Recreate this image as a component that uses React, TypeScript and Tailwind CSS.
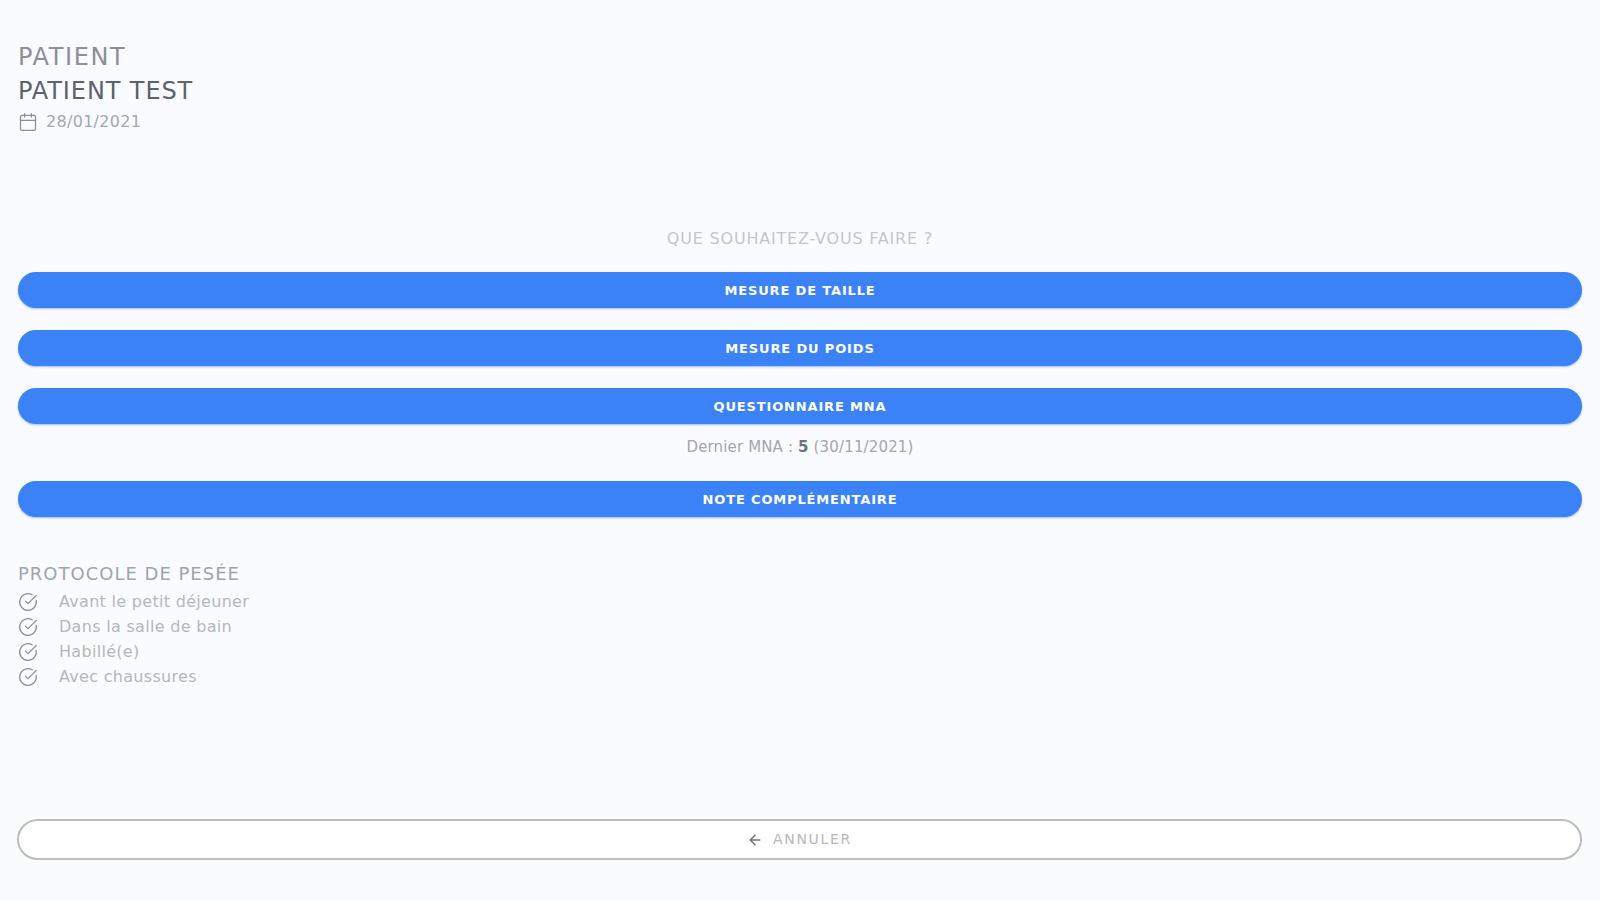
import { ArrowLeft, Calendar, CircleCheckBig } from "lucide-react";

const protocole = [
  "Avant le petit déjeuner",
  "Dans la salle de bain",
  "Habillé(e)",
  "Avec chaussures",
];

function BlueButton({ label }: { label: string }) {
  return (
    <button className="h-9 w-full rounded-full bg-[#3b82f6] pt-px text-[13px] font-semibold tracking-[0.85px] text-white shadow-[0_1px_2px_rgba(59,130,246,0.5)]">
      {label}
    </button>
  );
}

export default function App() {
  return (
    <div className="flex h-[900px] flex-col bg-[#fafbfe] px-[18px] pt-[44px] font-['DejaVu_Sans',sans-serif]">
      {/* PATIENT */}
      <div className="text-[24px] leading-[26px] tracking-[1.6px] text-[#8a8f98]">PATIENT</div>
      <div className="mt-[7px] text-[24px] font-medium leading-[28px] tracking-[0.9px] text-[#5b6270]">PATIENT TEST</div>
      <div className="mt-[7px] flex items-center gap-2 text-[16px] leading-5 tracking-[0.3px] text-[#a3a7ae]">
        <Calendar size={20} strokeWidth={1.5} className="text-[#8a8f98]" />
        <span>28/01/2021</span>
      </div>

      {/* ACTIONS */}
      <div className="mt-[97px] text-center text-[16px] leading-5 tracking-[0.8px] text-[#c4c6cb]">QUE SOUHAITEZ-VOUS FAIRE ?</div>
      <div className="mt-[23px] flex flex-col gap-[22px]">
        <BlueButton label="MESURE DE TAILLE" />
        <BlueButton label="MESURE DU POIDS" />
        <div>
          <BlueButton label="QUESTIONNAIRE MNA" />
          <div className="mt-[13px] text-center text-[15px] leading-5 tracking-[0.15px] text-[#a3a7ae]">
            Dernier MNA : <b className="text-[#6b7280]">5</b> (30/11/2021)
          </div>
        </div>
      </div>
      <div className="mt-[24px]">
        <BlueButton label="NOTE COMPLÉMENTAIRE" />
      </div>

      {/* PROTOCOLE */}
      <div className="mt-[45px] text-[18px] leading-6 tracking-[1px] text-[#a0a4ab]">PROTOCOLE DE PESÉE</div>
      <div className="mt-[3px] flex flex-col">
        {protocole.map((item) => (
          <div key={item} className="flex h-[25px] items-center gap-[21px] text-[16px] tracking-[0.3px] text-[#b4b7bd]">
            <CircleCheckBig size={20} strokeWidth={1.5} className="text-[#8a8f98]" />
            <span>{item}</span>
          </div>
        ))}
      </div>

      {/* ANNULER */}
      <button className="mt-[130px] -ml-px flex h-[41px] w-[1565px] items-center justify-center gap-[10px] rounded-full border-2 border-[#bdbdbf] bg-white text-[14px] tracking-[1.7px] text-[#b4b7bd]">
        <ArrowLeft size={16} strokeWidth={2.25} className="text-[#6b7280]" />
        <span>ANNULER</span>
      </button>
    </div>
  );
}
